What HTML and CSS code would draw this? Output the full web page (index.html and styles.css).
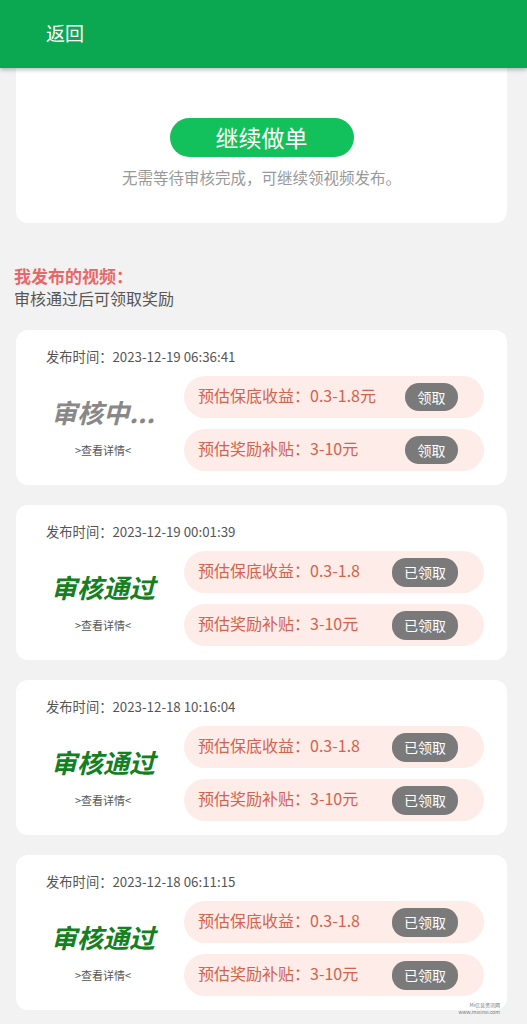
FILE: index.html
```html
<!DOCTYPE html>
<html>
<head>
  <meta charset="utf-8">
  <title>我发布的视频</title>
  <link rel="stylesheet" href="styles.css">
</head>
<body>
  <div class="header">
    <span class="back">返回</span>
  </div>

  <div class="page">
    <div class="top-card">
      <button class="go-btn">继续做单</button>
      <p class="tip">无需等待审核完成，可继续领视频发布。</p>
    </div>

    <div class="section-title">
      <h3>我发布的视频：</h3>
      <p>审核通过后可领取奖励</p>
    </div>

    <div class="video-list" id="videoList"></div>
  </div>

  <div class="watermark">Mi信息资讯网<br>www.mixinxi.com</div>

  <script>
    const videos = [
      { time: '2023-12-19 06:36:41', passed: false },
      { time: '2023-12-19 00:01:39', passed: true },
      { time: '2023-12-18 10:16:04', passed: true },
      { time: '2023-12-18 06:11:15', passed: true }
    ];

    function renderVideos(list) {
      const container = document.getElementById('videoList');
      container.innerHTML = '';
      list.forEach(v => {
        const card = document.createElement('div');
        card.className = 'video-card';
        const btn = v.passed ? '已领取' : '领取';
        card.innerHTML = `
          <div class="pub-time">发布时间：${v.time}</div>
          <div class="card-body">
            <div class="status-col">
              <div class="status ${v.passed ? 'passed' : 'pending'}">${v.passed ? '审核通过' : '审核中...'}</div>
              <div class="detail">&gt;查看详情&lt;</div>
            </div>
            <div class="rewards">
              <div class="reward-row">
                <span>预估保底收益：0.3-1.8${v.passed ? '' : '元'}</span>
                <button class="claim-btn ${v.passed ? 'wide' : ''}">${btn}</button>
              </div>
              <div class="reward-row">
                <span>预估奖励补贴：3-10元</span>
                <button class="claim-btn ${v.passed ? 'wide' : ''}">${btn}</button>
              </div>
            </div>
          </div>
        `;
        container.appendChild(card);
      });
    }

    renderVideos(videos);
  </script>
</body>
</html>
```

FILE: styles.css
```css
body {
  margin: 0;
  background: #f2f2f2;
  font-family: "Noto Sans CJK SC", "Noto Sans", sans-serif;
  width: 527px;
  height: 1024px;
  overflow: hidden;
  position: relative;
}
.header {
  height: 68px;
  background: #0ba751;
  box-shadow: 0 2px 4px rgba(0,0,0,0.25);
  position: relative;
  z-index: 2;
  display: flex;
  align-items: center;
  padding-left: 46px;
  padding-bottom: 4px;
  box-sizing: border-box;
}
.back {
  color: #fff;
  font-size: 19px;
}
.page {
  padding: 0 20px 0 16px;
}
.top-card {
  background: #fff;
  height: 155px;
  border-radius: 0 0 12px 12px;
  box-sizing: border-box;
  padding-top: 50px;
  text-align: center;
}
.go-btn {
  width: 184px;
  height: 39px;
  border: none;
  border-radius: 20px;
  background: #12c15b;
  color: #fff;
  font-family: inherit;
  font-size: 23px;
  line-height: 39px;
  padding: 0;
}
.tip {
  margin: 9px 0 0;
  font-size: 15.5px;
  line-height: 22px;
  color: #999;
}
.section-title {
  padding: 42px 0 0 0;
  margin-left: -2px;
}
.section-title h3 {
  margin: 0;
  font-size: 17px;
  line-height: 22px;
  color: #e8686a;
  font-weight: bold;
}
.section-title p {
  margin: 0;
  font-size: 16px;
  line-height: 23px;
  color: #555;
}
.video-list {
  display: flex;
  flex-direction: column;
  gap: 20px;
  margin-top: 20px;
}
.video-card {
  background: #fff;
  border-radius: 12px;
  height: 155px;
  box-sizing: border-box;
  padding: 17px 23px 0 30px;
}
.pub-time {
  font-size: 13.3px;
  line-height: 20px;
  color: #555;
}
.card-body {
  display: flex;
  margin-top: 9px;
}
.status-col {
  width: 114px;
  text-align: center;
  padding-top: 21px;
}
.status {
  font-size: 26px;
  line-height: 30px;
  font-weight: bold;
  font-style: italic;
  white-space: nowrap;
}
.status.pending { color: #888; }
.status.passed { color: #14801f; }
.detail {
  margin-top: 16px;
  font-size: 11px;
  line-height: 14px;
  color: #555;
}
.rewards {
  margin-left: 24px;
  width: 300px;
  display: flex;
  flex-direction: column;
  gap: 11px;
}
.reward-row {
  height: 42px;
  border-radius: 21px;
  background: #fdece8;
  display: flex;
  align-items: center;
  justify-content: space-between;
  padding: 0 26px 0 14px;
  box-sizing: border-box;
}
.reward-row span {
  font-size: 16px;
  color: #d4624c;
  margin-top: -4px;
}
.claim-btn {
  width: 53px;
  height: 28px;
  border: none;
  border-radius: 14px;
  background: #7a7a7a;
  color: #fff;
  font-family: inherit;
  font-size: 14px;
  padding: 0;
}
.claim-btn.wide {
  width: 66px;
  height: 29px;
}
.watermark {
  position: absolute;
  right: 27px;
  bottom: 9px;
  font-size: 5px;
  line-height: 7px;
  color: #777;
  text-align: right;
}
```
